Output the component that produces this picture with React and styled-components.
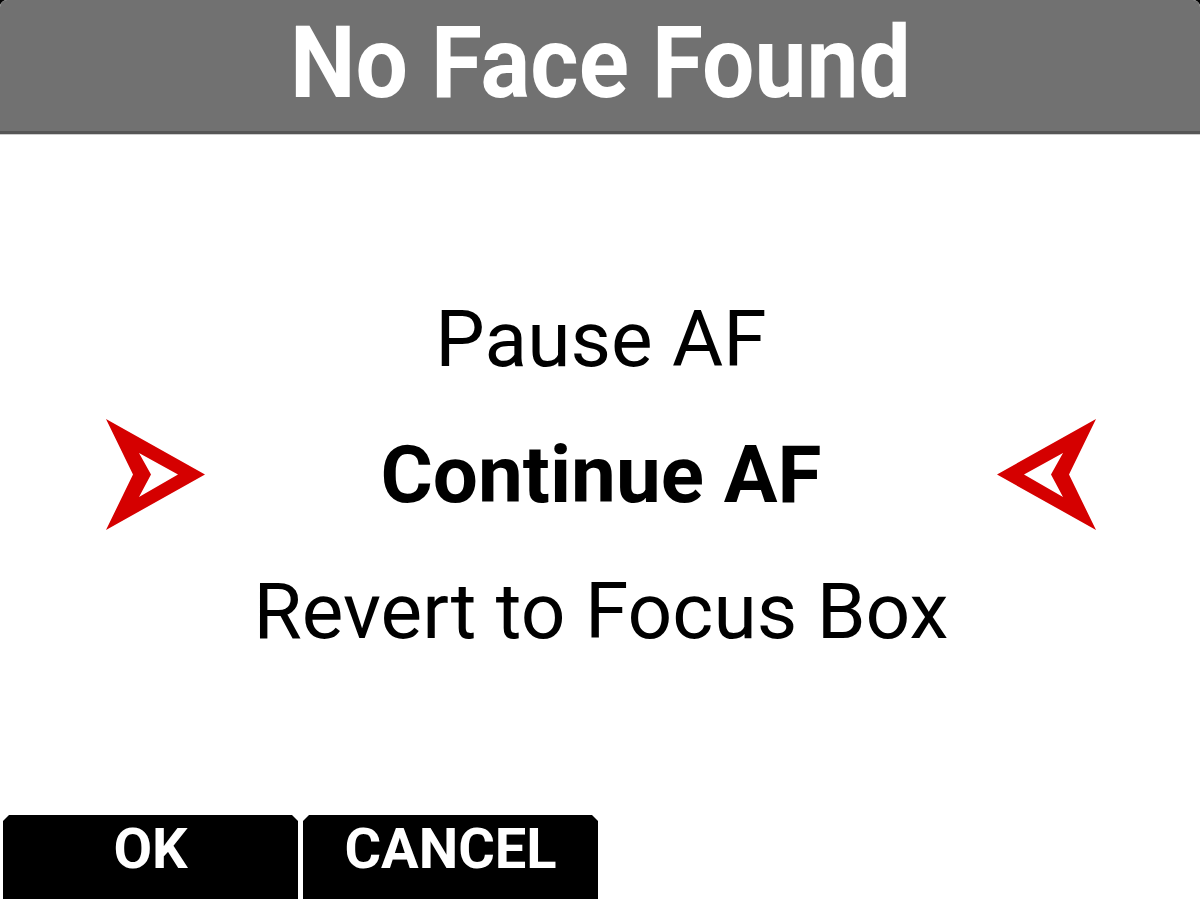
import styled, { createGlobalStyle } from 'styled-components';

const GlobalStyle = createGlobalStyle`
  html, body {
    margin: 0;
    padding: 0;
    background: #000;
  }
  body {
    font-family: Roboto, "Liberation Sans", Arial, sans-serif;
  }
`;

const options = [
  { label: 'Pause AF' },
  { label: 'Continue AF', selected: true },
  { label: 'Revert to Focus Box' },
];

function Pointer({ flip }) {
  return (
    <svg
      width="100"
      height="113"
      viewBox="0 0 100 113"
      style={flip ? { transform: 'scaleX(-1)' } : undefined}
    >
      <path
        fillRule="evenodd"
        fill="#d50000"
        d="M1 1 L100 56.5 L1 112 L28 56.5 Z M34 35 L73 56.5 L34 79 L46 56.5 Z"
      />
    </svg>
  );
}

export default function App() {
  return (
    <>
      <GlobalStyle />
      <Screen>
        <Header>
          <Title>No Face Found</Title>
        </Header>

        <Body>
          <OptionList>
            {options.map((opt) => (
              <OptionRow key={opt.label}>
                <ArrowSlot>{opt.selected && <Pointer />}</ArrowSlot>
                <OptionLabel $selected={opt.selected}>{opt.label}</OptionLabel>
                <ArrowSlot>{opt.selected && <Pointer flip />}</ArrowSlot>
              </OptionRow>
            ))}
          </OptionList>
        </Body>

        <Footer>
          <SoftKey>OK</SoftKey>
          <SoftKey>CANCEL</SoftKey>
        </Footer>
      </Screen>
    </>
  );
}

const Screen = styled.div`
  width: 1200px;
  height: 899px;
  background: #fff;
  border-radius: 7px 7px 0 0;
  overflow: hidden;
  display: flex;
  flex-direction: column;
`;

const Header = styled.div`
  height: 134px;
  padding-bottom: 6px;
  box-sizing: border-box;
  background: #717171;
  border-bottom: 3px solid #565656;
  box-shadow: 0 1px 0 #cdcdcd;
  display: flex;
  align-items: center;
  justify-content: center;
  flex-shrink: 0;
`;

const Title = styled.div`
  color: #fff;
  font-size: 101px;
  font-weight: 700;
  line-height: 1;
  transform: scaleX(0.92);
  white-space: nowrap;
`;

const Body = styled.div`
  flex: 1;
  display: flex;
  align-items: center;
  justify-content: center;
`;

const OptionList = styled.div`
  width: 100%;
  display: flex;
  flex-direction: column;
`;

const OptionRow = styled.div`
  height: 136px;
  display: grid;
  grid-template-columns: 100px 1fr 100px;
  align-items: center;
  padding: 0 103px 0 105px;
`;

const ArrowSlot = styled.div`
  height: 113px;
  display: flex;
  align-items: center;
`;

const OptionLabel = styled.div`
  text-align: center;
  color: #000;
  font-size: ${(p) => (p.$selected ? '80px' : '78.5px')};
  font-weight: ${(p) => (p.$selected ? 700 : 400)};
  line-height: 136px;
  white-space: nowrap;
`;

const Footer = styled.div`
  height: 84px;
  display: flex;
  gap: 5px;
  padding-left: 3px;
  flex-shrink: 0;
`;

const SoftKey = styled.div`
  width: 295px;
  height: 84px;
  background: #000;
  color: #fff;
  font-size: 56px;
  font-weight: 700;
  line-height: 1;
  padding-top: 6px;
  box-sizing: border-box;
  display: flex;
  align-items: flex-start;
  justify-content: center;
  clip-path: polygon(6px 0, calc(100% - 6px) 0, 100% 6px, 100% 100%, 0 100%, 0 6px);
`;
